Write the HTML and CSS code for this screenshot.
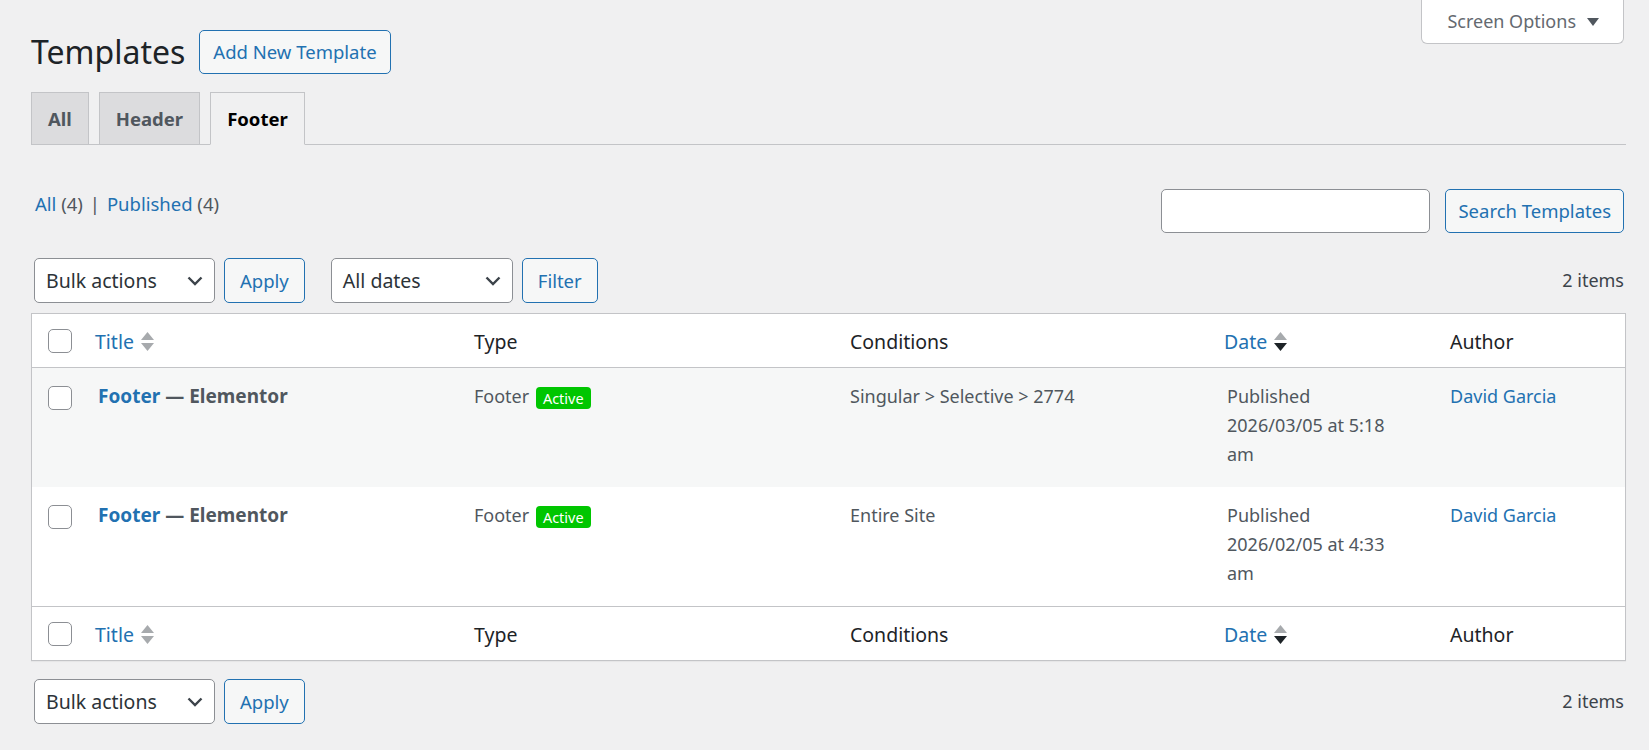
FILE: index.html
```html
<!DOCTYPE html>
<html lang="en">
<head>
    <meta charset="UTF-8">
    <meta name="viewport" content="width=device-width, initial-scale=1.0">
    <title>Templates</title>
    <link rel="stylesheet" href="styles.css">
</head>
<body>
    <div class="screen-meta-links">
        <button class="screen-options" type="button">Screen Options <span class="arrow"></span></button>
    </div>

    <div class="wrap">
        <div class="page-head">
            <h1>Templates</h1>
            <a class="button" href="#">Add New Template</a>
        </div>

        <nav class="nav-tabs">
            <a class="nav-tab" href="#">All</a>
            <a class="nav-tab" href="#">Header</a>
            <a class="nav-tab active" href="#">Footer</a>
        </nav>

        <div class="filters-row">
            <ul class="subsubsub">
                <li><a href="#">All <span class="count">(4)</span></a> <span class="sep">|</span></li>
                <li><a href="#">Published <span class="count">(4)</span></a></li>
            </ul>
            <form class="search-box" onsubmit="return false">
                <input type="search" class="search-input">
                <button class="button" type="submit">Search Templates</button>
            </form>
        </div>

        <div class="tablenav">
            <div class="actions">
                <div class="select select-bulk">
                    <span>Bulk actions</span>
                    <svg width="16" height="10" viewBox="0 0 16 10"><path d="M1.5 1.5 L8 8 L14.5 1.5" fill="none" stroke="#3c434a" stroke-width="2.4"/></svg>
                </div>
                <button class="button" type="button">Apply</button>
            </div>
            <div class="actions">
                <div class="select select-dates">
                    <span>All dates</span>
                    <svg width="16" height="10" viewBox="0 0 16 10"><path d="M1.5 1.5 L8 8 L14.5 1.5" fill="none" stroke="#3c434a" stroke-width="2.4"/></svg>
                </div>
                <button class="button" type="button">Filter</button>
            </div>
            <span class="displaying-num">2 items</span>
        </div>

        <table class="list-table">
            <colgroup>
                <col class="col-cb">
                <col class="col-title">
                <col class="col-type">
                <col class="col-conditions">
                <col class="col-date">
                <col class="col-author">
            </colgroup>
            <thead>
                <tr>
                    <th class="check-column"><input type="checkbox"></th>
                    <th class="sortable"><a href="#">Title <svg class="sort" width="13" height="20" viewBox="0 0 13 20"><path d="M6.5 0 L13 8 H0 Z" fill="#a7aaad"/><path d="M0 11 H13 L6.5 19 Z" fill="#a7aaad"/></svg></a></th>
                    <th>Type</th>
                    <th>Conditions</th>
                    <th class="sortable"><a href="#">Date <svg class="sort" width="13" height="20" viewBox="0 0 13 20"><path d="M6.5 0 L13 8 H0 Z" fill="#a7aaad"/><path d="M0 11 H13 L6.5 19 Z" fill="#1d2327"/></svg></a></th>
                    <th>Author</th>
                </tr>
            </thead>
            <tbody>
                <tr class="alternate">
                    <th class="check-column"><input type="checkbox"></th>
                    <td class="title-cell"><strong><a class="row-title" href="#">Footer</a> — <span class="post-state">Elementor</span></strong></td>
                    <td>Footer <span class="badge">Active</span></td>
                    <td>Singular &gt; Selective &gt; 2774</td>
                    <td class="date-cell">Published<br>2026/03/05 at 5:18 am</td>
                    <td><a href="#">David Garcia</a></td>
                </tr>
                <tr>
                    <th class="check-column"><input type="checkbox"></th>
                    <td class="title-cell"><strong><a class="row-title" href="#">Footer</a> — <span class="post-state">Elementor</span></strong></td>
                    <td>Footer <span class="badge">Active</span></td>
                    <td>Entire Site</td>
                    <td class="date-cell">Published<br>2026/02/05 at 4:33 am</td>
                    <td><a href="#">David Garcia</a></td>
                </tr>
            </tbody>
            <tfoot>
                <tr>
                    <th class="check-column"><input type="checkbox"></th>
                    <th class="sortable"><a href="#">Title <svg class="sort" width="13" height="20" viewBox="0 0 13 20"><path d="M6.5 0 L13 8 H0 Z" fill="#a7aaad"/><path d="M0 11 H13 L6.5 19 Z" fill="#a7aaad"/></svg></a></th>
                    <th>Type</th>
                    <th>Conditions</th>
                    <th class="sortable"><a href="#">Date <svg class="sort" width="13" height="20" viewBox="0 0 13 20"><path d="M6.5 0 L13 8 H0 Z" fill="#a7aaad"/><path d="M0 11 H13 L6.5 19 Z" fill="#1d2327"/></svg></a></th>
                    <th>Author</th>
                </tr>
            </tfoot>
        </table>

        <div class="tablenav tablenav-bottom">
            <div class="actions">
                <div class="select select-bulk">
                    <span>Bulk actions</span>
                    <svg width="16" height="10" viewBox="0 0 16 10"><path d="M1.5 1.5 L8 8 L14.5 1.5" fill="none" stroke="#3c434a" stroke-width="2.4"/></svg>
                </div>
                <button class="button" type="button">Apply</button>
            </div>
            <span class="displaying-num">2 items</span>
        </div>
    </div>
</body>
</html>
```

FILE: styles.css
```css
body {
    margin: 0;
    background: #f0f0f1;
    color: #3c434a;
    font-family: "Noto Sans", "Open Sans", Arial, sans-serif;
    font-size: 18px;
    line-height: 1.6;
}
a {
    color: #2271b1;
    text-decoration: none;
}

/* screen options tab */
.screen-meta-links {
    float: right;
    margin-right: 25px;
}
.screen-options {
    display: flex;
    align-items: center;
    gap: 11px;
    height: 44px;
    box-sizing: border-box;
    padding: 0 24px 0 25px;
    background: #fff;
    border: 1px solid #c3c4c7;
    border-top: none;
    border-radius: 0 0 6px 6px;
    color: #646970;
    font: inherit;
    font-size: 18px;
}
.screen-options .arrow {
    width: 0;
    height: 0;
    border-left: 6px solid transparent;
    border-right: 6px solid transparent;
    border-top: 8px solid #50575e;
}

.wrap {
    padding: 30px 23px 0 31px;
}
.page-head {
    display: flex;
    align-items: center;
    gap: 14px;
}
.page-head h1 {
    margin: 0;
    font-size: 32px;
    font-weight: 400;
    line-height: 44px;
    color: #1d2327;
}
.button {
    display: inline-flex;
    align-items: center;
    justify-content: center;
    box-sizing: border-box;
    height: 44px;
    padding: 0 16px;
    background: #f6f7f7;
    border: 1px solid #2271b1;
    border-radius: 5px;
    color: #2271b1;
    font: inherit;
    font-size: 18.5px;
}
.page-head .button {
    padding: 0 13px;
}
.search-box .button {
    padding: 0 12px;
}

/* tabs */
.nav-tabs {
    display: flex;
    gap: 10px;
    margin-top: 18px;
    border-bottom: 1px solid #c3c4c7;
}
.nav-tab {
    display: block;
    height: 51px;
    line-height: 51px;
    padding: 0 16px;
    margin-bottom: -1px;
    border: 1px solid #c3c4c7;
    background: #dcdcde;
    color: #50575e;
    font-weight: 700;
    font-size: 18.5px;
}
.nav-tab.active {
    background: #f0f0f1;
    border-bottom-color: #f0f0f1;
    color: #000;
}

/* views + search */
.filters-row {
    display: flex;
    justify-content: space-between;
    align-items: flex-start;
    margin-top: 44px;
}
.subsubsub {
    display: flex;
    gap: 5px;
    list-style: none;
    margin: 0 0 0 4px;
    padding: 0;
    font-size: 18.5px;
    line-height: 30px;
}
.subsubsub .count {
    color: #50575e;
}
.subsubsub .sep {
    color: #50575e;
    margin: 0 2px;
}
.search-box {
    display: flex;
    gap: 15px;
    margin-right: 2px;
}
.search-input {
    width: 269px;
    height: 44px;
    box-sizing: border-box;
    border: 1px solid #8c8f94;
    border-radius: 5px;
    background: #fff;
}

/* bulk actions bar */
.tablenav {
    display: flex;
    align-items: center;
    margin-top: 25px;
    height: 45px;
    padding: 0 2px 0 3px;
}
.tablenav .actions {
    display: flex;
    gap: 9px;
    margin-right: 26px;
}
.tablenav .button {
    height: 45px;
    padding: 0 15px;
}
.select {
    display: flex;
    align-items: center;
    justify-content: space-between;
    box-sizing: border-box;
    width: 181px;
    height: 45px;
    padding: 0 11px;
    background: #fff;
    border: 1px solid #8c8f94;
    border-radius: 5px;
    color: #2c3338;
    font-size: 19.5px;
}
.select-dates {
    width: 182px;
}
.displaying-num {
    margin-left: auto;
}
.tablenav-bottom {
    margin-top: 18px;
}

/* list table */
.list-table {
    width: 100%;
    margin-top: 10px;
    border: 1px solid #c3c4c7;
    border-spacing: 0;
    table-layout: fixed;
    background: #fff;
    box-shadow: 0 1px 1px rgba(0,0,0,0.04);
}
.col-cb { width: 51px; }
.col-title { width: 376px; }
.col-type { width: 376px; }
.col-conditions { width: 377px; }
.col-date { width: 223px; }
.col-author { width: 190px; }

.list-table thead th,
.list-table tfoot th {
    padding: 13px 15px 11px;
    font-size: 19.5px;
    font-weight: 400;
    line-height: 29px;
    text-align: left;
    color: #1d2327;
}
.list-table thead th {
    border-bottom: 1px solid #c3c4c7;
}
.list-table tfoot th {
    border-top: 1px solid #c3c4c7;
}
.list-table th.sortable {
    padding-left: 12px;
}
.sort {
    margin-left: 2px;
    vertical-align: -3px;
}
.list-table td {
    padding: 14px 15px 18px;
    vertical-align: top;
    line-height: 29px;
    color: #50575e;
}
.list-table tr.alternate {
    background: #f6f7f7;
}
.list-table .check-column {
    padding: 0 0 0 16px;
    vertical-align: middle;
}
.list-table tbody .check-column {
    padding-top: 18px;
    vertical-align: top;
}
.check-column input {
    appearance: none;
    display: block;
    width: 24px;
    height: 24px;
    margin: 0;
    border: 1px solid #8c8f94;
    border-radius: 5px;
    background: #fff;
}
.title-cell {
    font-size: 19px;
}
.title-cell strong {
    color: #50575e;
}
.title-cell .post-state {
    color: #50575e;
}
.badge {
    display: inline-block;
    margin-left: 2px;
    padding: 0 7px;
    height: 22px;
    line-height: 22px;
    border-radius: 4px;
    background: #00c600;
    color: #fff;
    font-size: 14.5px;
    vertical-align: middle;
}
.date-cell {
    padding-right: 40px !important;
}
```
